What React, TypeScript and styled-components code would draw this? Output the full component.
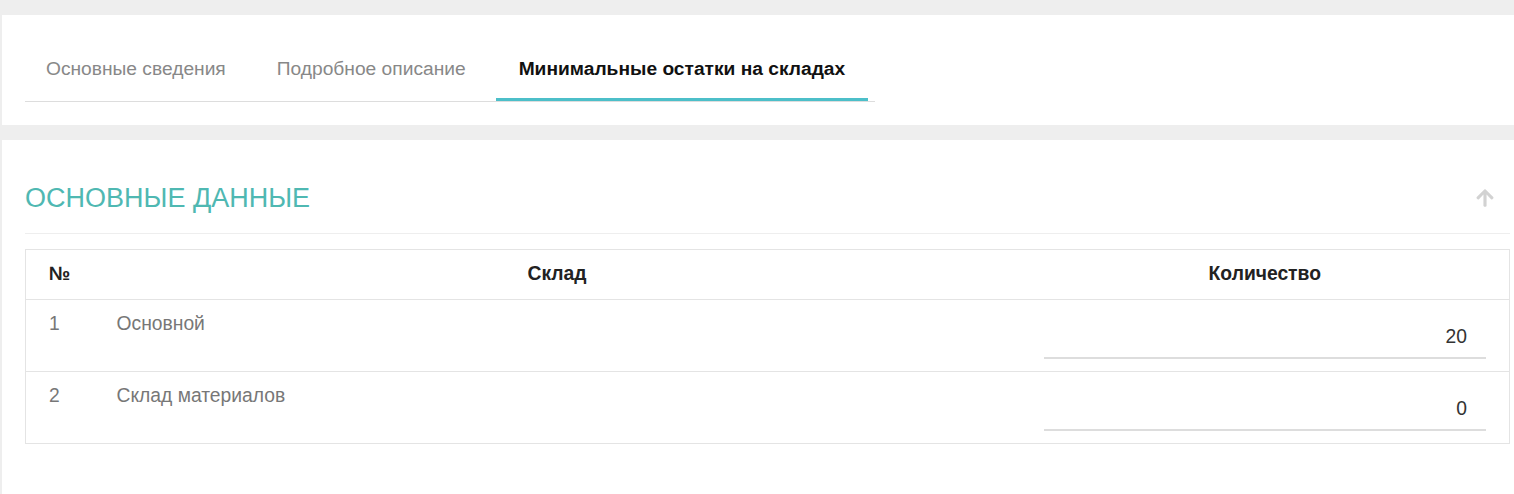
import React from "react";
import styled, { createGlobalStyle } from "styled-components";

const GlobalStyle = createGlobalStyle`
  html, body {
    margin: 0;
    padding: 0;
    background: #eeeeee;
    font-family: "Liberation Sans", Arial, sans-serif;
  }
  * { box-sizing: border-box; }
`;

const Page = styled.div`
  display: flex;
  flex-direction: column;
  gap: 15px;
  padding: 15px 0 0 2px;
  min-height: 100vh;
`;

const Card = styled.section<{ $pad: string; $grow?: boolean }>`
  background: #ffffff;
  padding: ${(p) => p.$pad};
  flex: ${(p) => (p.$grow ? 1 : "none")};
`;

const TabNav = styled.nav`
  display: flex;
  gap: 8px;
  width: 850px;
  border-bottom: 1px solid #dddddd;
`;

const Tab = styled.div<{ $active?: boolean }>`
  padding: ${(p) => (p.$active ? "0 23px 17px 23px" : "0 22px 17px 21px")};
  font-size: 19.2px;
  line-height: 24px;
  color: ${(p) => (p.$active ? "#111111" : "#888888")};
  font-weight: ${(p) => (p.$active ? 700 : 400)};
  border-bottom: 3px solid ${(p) => (p.$active ? "#4cbfc9" : "transparent")};
  white-space: nowrap;
  cursor: pointer;
`;

const SectionHeader = styled.div`
  display: flex;
  align-items: center;
  justify-content: space-between;
  padding: 0 15px 20px 0;
  border-bottom: 1px solid #eeeeee;
`;

const SectionTitle = styled.h2`
  margin: 0;
  font-size: 27px;
  line-height: 30px;
  font-weight: 400;
  color: #4fb8b2;
  text-transform: uppercase;
`;

const CollapseButton = styled.button`
  border: 0;
  background: none;
  padding: 0;
  display: flex;
  cursor: pointer;
`;

const Table = styled.table`
  width: 100%;
  margin-top: 15px;
  border-collapse: collapse;
  border: 1px solid #e4e4e4;
  table-layout: fixed;
`;

const HeadCell = styled.th<{ $align?: string; $width?: string }>`
  padding: 12px 23px 13px;
  font-size: 19.3px;
  line-height: 24px;
  font-weight: 700;
  color: #222222;
  text-align: ${(p) => p.$align || "center"};
  width: ${(p) => p.$width || "auto"};
  border-bottom: 1px solid #e4e4e4;
`;

const Row = styled.tr`
  border-bottom: 1px solid #e4e4e4;
`;

const Cell = styled.td`
  padding: 12px 23px;
  font-size: 19.3px;
  line-height: 24px;
  color: #777777;
  vertical-align: top;
`;

const QtyInput = styled.input`
  display: block;
  width: 100%;
  height: 34px;
  margin-top: 13px;
  padding: 0 19px 8px 0;
  border: 0;
  border-bottom: 2px solid #dddddd;
  background: transparent;
  font-family: "Liberation Sans", Arial, sans-serif;
  font-size: 19.3px;
  line-height: 24px;
  color: #333333;
  text-align: right;
  outline: none;
`;

const ArrowUp = () => (
  <svg width="20" height="20" viewBox="0 0 448 512" fill="#d2d2d2">
    <path d="M34.9 289.5l-22.2-22.2c-9.4-9.4-9.4-24.6 0-33.9L207 39c9.4-9.4 24.6-9.4 33.9 0l194.3 194.3c9.4 9.4 9.4 24.6 0 33.9L413 289.4c-9.5 9.5-25 9.3-34.3-.4L264 168.6V456c0 13.3-10.7 24-24 24h-32c-13.3 0-24-10.7-24-24V168.6L69.2 289.1c-9.3 9.8-24.8 10-34.3.4z" />
  </svg>
);

const rows = [
  { n: 1, name: "Основной", qty: "20" },
  { n: 2, name: "Склад материалов", qty: "0" },
];

export default function App() {
  return (
    <>
      <GlobalStyle />
      <Page>
        <Card $pad="42px 0 23px 23px">
          <TabNav>
            <Tab>Основные сведения</Tab>
            <Tab>Подробное описание</Tab>
            <Tab $active>Минимальные остатки на складах</Tab>
          </TabNav>
        </Card>
        <Card $pad="43px 4px 50px 23px" $grow>
          <SectionHeader>
            <SectionTitle>Основные данные</SectionTitle>
            <CollapseButton aria-label="Свернуть">
              <ArrowUp />
            </CollapseButton>
          </SectionHeader>
          <Table>
            <thead>
              <tr>
                <HeadCell $align="left" $width="68px">№</HeadCell>
                <HeadCell $width="927px">Склад</HeadCell>
                <HeadCell>Количество</HeadCell>
              </tr>
            </thead>
            <tbody>
              {rows.map((r) => (
                <Row key={r.n}>
                  <Cell>{r.n}</Cell>
                  <Cell>{r.name}</Cell>
                  <Cell>
                    <QtyInput defaultValue={r.qty} />
                  </Cell>
                </Row>
              ))}
            </tbody>
          </Table>
        </Card>
      </Page>
    </>
  );
}
